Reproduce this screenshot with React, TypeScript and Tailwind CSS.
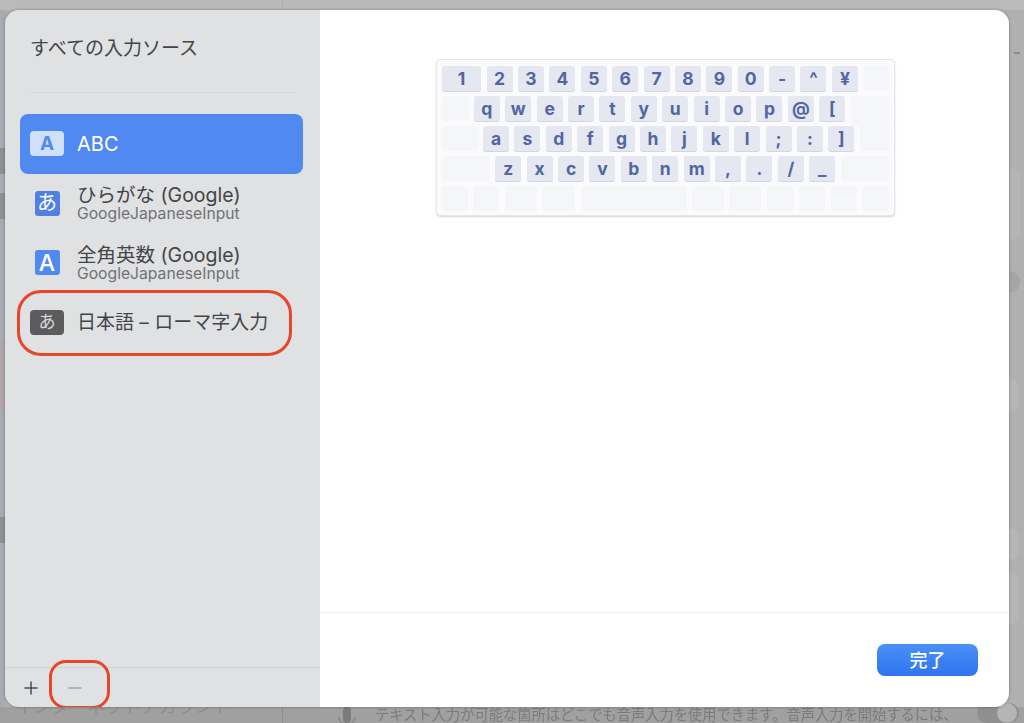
import React from "react";

const row1 = ["2", "3", "4", "5", "6", "7", "8", "9", "0", "-", "^", "¥"];
const row2 = ["q", "w", "e", "r", "t", "y", "u", "i", "o", "p", "@", "["];
const row3 = ["a", "s", "d", "f", "g", "h", "j", "k", "l", ";", ":", "]"];
const row4 = ["z", "x", "c", "v", "b", "n", "m", ",", ".", "/", "_"];

function Key({ label }: { label: string }) {
  return (
    <div className="flex h-[24.6px] w-[26px] shrink-0 items-center justify-center rounded-[3px] bg-[#e6e8f1] text-[17.5px] leading-none font-bold text-[#5266a3] shadow-[0_1px_0_#d3d6e0]">
      {label}
    </div>
  );
}

function Blank({ className }: { className: string }) {
  return <div className={`h-[24.6px] shrink-0 rounded-[3px] bg-[#f5f6f8] ${className}`} />;
}

function Keyboard() {
  return (
    <div className="flex h-[157px] w-[459px] flex-col gap-[5.4px] rounded-[4px] border border-[#e6e7ea] bg-[#fbfbfd] pt-[6px] pl-[5px] shadow-[0_1px_2px_rgba(0,0,0,0.16)]">
      <div className="flex h-[24.6px] gap-[5.4px]">
        <div className="flex h-[24.6px] w-[39.2px] shrink-0 items-center justify-center rounded-[3px] bg-[#e6e8f1] text-[17.5px] leading-none font-bold text-[#5266a3] shadow-[0_1px_0_#d3d6e0]">
          1
        </div>
        {row1.map((k) => (
          <Key key={k} label={k} />
        ))}
        <Blank className="w-[26.2px]" />
      </div>
      <div className="flex h-[24.6px] gap-[5.4px]">
        <Blank className="w-[26.5px]" />
        {row2.map((k) => (
          <Key key={k} label={k} />
        ))}
        <div className="h-[30px] w-[38.3px] shrink-0 rounded-t-[3px] bg-[#f5f6f8]" />
      </div>
      <div className="flex h-[24.6px] gap-[5.4px]">
        <Blank className="w-[35.7px]" />
        {row3.map((k) => (
          <Key key={k} label={k} />
        ))}
        <Blank className="w-[29.1px]" />
      </div>
      <div className="flex h-[24.6px] gap-[5.4px]">
        <Blank className="w-[47.9px]" />
        {row4.map((k) => (
          <Key key={k} label={k} />
        ))}
        <Blank className="w-[48.3px]" />
      </div>
      <div className="flex h-[24.6px] w-[447px] gap-[5.4px]">
        <Blank className="w-[26px]" />
        <Blank className="w-[26px]" />
        <Blank className="w-[32px]" />
        <Blank className="w-[33px]" />
        <Blank className="flex-1" />
        <Blank className="w-[32px]" />
        <Blank className="w-[32px]" />
        <Blank className="w-[27px]" />
        <Blank className="w-[26px]" />
        <div className="flex h-[24.6px] w-[26px] shrink-0 flex-col gap-px">
          <div className="h-[12px] rounded-t-[3px] bg-[#f5f6f8]" />
          <div className="h-[11.6px] rounded-b-[3px] bg-[#f5f6f8]" />
        </div>
        <Blank className="w-[27px]" />
      </div>
    </div>
  );
}

function SourceRow({
  icon,
  title,
  sub,
  selected,
  titleClass,
}: {
  icon: React.ReactNode;
  title: string;
  sub?: string;
  selected?: boolean;
  titleClass: string;
}) {
  return (
    <div
      className={`flex h-[59.5px] items-center rounded-[8px] ${selected ? "bg-[#5089ef] text-white" : "text-[#444548]"}`}
    >
      <div className="flex w-[57px] shrink-0 justify-center pr-[6px] pl-[3px]">{icon}</div>
      <div className="mt-[1px] flex flex-col">
        <div className={`leading-[21px] ${titleClass}`}>{title}</div>
        {sub && <div className="text-[15.7px] leading-[16px] text-[#717275]">{sub}</div>}
      </div>
    </div>
  );
}

function Sidebar() {
  return (
    <div className="flex w-[315px] shrink-0 flex-col bg-[#e0e1e3]">
      <div className="relative flex flex-1 flex-col">
        <div className="pt-[26px] pl-[25px] text-[19px] leading-[26px] text-[#444548]">
          すべての入力ソース
        </div>
        <div className="mt-[30px] mr-[26px] ml-[25px] h-px bg-[#d5d6d8]" />
        <div className="mt-[21px] flex flex-col pr-[17px] pl-[15px]">
          <SourceRow
            selected
            title="ABC"
            titleClass="text-[20px]"
            icon={
              <div className="flex h-[25px] w-[34px] items-center justify-center rounded-[4px] bg-[#cfe0fb] text-[19px] font-bold text-[#5089ef]">
                A
              </div>
            }
          />
          <SourceRow
            title="ひらがな (Google)"
            titleClass="text-[19.5px]"
            sub="GoogleJapaneseInput"
            icon={
              <div className="flex h-[25px] w-[25px] items-center justify-center rounded-[3px] bg-[#4f80e2] text-[20px] text-white">
                あ
              </div>
            }
          />
          <SourceRow
            title="全角英数 (Google)"
            titleClass="text-[19.5px]"
            sub="GoogleJapaneseInput"
            icon={
              <div className="flex h-[25px] w-[25px] items-center justify-center rounded-[3px] bg-[#5089ef] text-[23px] font-medium text-white">
                A
              </div>
            }
          />
          <SourceRow
            title="日本語 – ローマ字入力"
            titleClass="text-[19px]"
            icon={
              <div className="flex h-[25px] w-[34px] items-center justify-center rounded-[4px] bg-[#5c5c5e] text-[17px] text-[#d8d9db]">
                あ
              </div>
            }
          />
        </div>
        <div className="absolute top-[280px] left-[12px] h-[66px] w-[275px] rounded-[24px] border-[3px] border-[#e8452a]" />
      </div>
      <div className="relative flex h-[40px] shrink-0 items-center border-t border-[#d2d3d5] pl-[18px]">
        <svg width="16" height="16" viewBox="0 0 16 16" className="shrink-0">
          <path d="M8 1.5v13M1.5 8h13" stroke="#4b4c4f" strokeWidth="1.5" fill="none" />
        </svg>
        <svg width="16" height="16" viewBox="0 0 16 16" className="ml-[28px] shrink-0">
          <path d="M1.5 8h13" stroke="#a3a4a7" strokeWidth="1.5" fill="none" />
        </svg>
        <div className="absolute -top-[8px] left-[44px] h-[49px] w-[61px] rounded-[17px] border-[3px] border-[#e8452a]" />
      </div>
    </div>
  );
}

export default function App() {
  return (
    <div className="h-[723px] w-[1024px] overflow-hidden bg-[#a8a8a8]">
      <div className="flex h-[723px] w-[1024px] flex-col bg-[#b0b0b0] font-[Inter,'Noto_Sans_CJK_JP',sans-serif] blur-[0.35px]">
        <div className="flex h-[10px] shrink-0 bg-[#bababa]">
          <div className="w-[283px] border-r border-[#adadad]" />
        </div>
        <div className="flex h-[697px] shrink-0">
          <div className="flex w-[5px] shrink-0 flex-col bg-[#a9abb4]">
            <div className="mt-[138px] h-[26px] bg-[#8f9092]" />
            <div className="mt-[19px] h-[26px] bg-[#8f9092]" />
            <div className="mt-[120px] h-[70px] bg-[#b0a5a9]" />
            <div className="mt-[108px] h-[26px] bg-[#8f9092]" />
          </div>
          <div className="relative z-10 flex w-[1004px] shrink-0 overflow-hidden rounded-[14px] shadow-[0_0_3px_rgba(0,0,0,0.35)]">
            <Sidebar />
            <div className="flex flex-1 flex-col bg-white">
              <div className="flex-1 pt-[49px] pl-[116px]">
                <Keyboard />
              </div>
              <div className="flex h-[95px] shrink-0 justify-end border-t border-[#ececec] pt-[31px] pr-[31px]">
                <div className="flex h-[32px] w-[101px] items-center justify-center rounded-[8px] bg-linear-to-b from-[#4a90f8] to-[#2f74ee] text-[18px] font-medium text-white">
                  完了
                </div>
              </div>
            </div>
          </div>
          <div className="flex w-[15px] shrink-0 flex-col bg-[#b0b0b0]">
            <div className="mt-[42px] ml-[5px] h-[2px] w-[6px] bg-[#8a8a8a]" />
            <div className="mt-[115px] ml-[1px] h-[70px] w-[10px] rounded-r-[6px] bg-[#b5b5b5]" />
            <div className="mt-[32px] h-[22px] w-[11px] rounded-r-full bg-[#a5a5a5]" />
            <div className="mt-[86px] h-[33px] w-[9px] rounded-r-[6px] bg-[#b6b6b6]" />
            <div className="mt-[117px] h-[30px] w-[9px] rounded-r-[6px] bg-[#b6b6b6]" />
            <div className="mt-[13px] h-[52px] w-[9px] rounded-r-[6px] bg-[#b6b6b6]" />
          </div>
        </div>
        <div className="flex h-[16px] shrink-0 bg-[#a0a0a0]">
          <div className="w-[283px] shrink-0 overflow-visible border-r border-[#909090] pl-[15px] text-[18px] leading-[18px] whitespace-nowrap text-[#8e8e8e] blur-[0.6px]">
            <div className="-mt-[9px]">インターネットアカウント</div>
          </div>
          <div className="ml-[53px] flex w-[22px] shrink-0 justify-center">
            <svg width="22" height="16" viewBox="0 0 22 16">
              <rect x="7" y="0" width="8" height="16" rx="4" fill="#7c7c7c" />
              <path d="M3 10c0 4 3 7 8 7s8-3 8-7" stroke="#7c7c7c" strokeWidth="1.2" fill="none" />
            </svg>
          </div>
          <div className="ml-[17px] text-[14.27px] leading-[16px] whitespace-nowrap text-[#7b7b7b] blur-[0.5px]">
            テキスト入力が可能な箇所はどこでも音声入力を使用できます。音声入力を開始するには、
          </div>
          <div className="-mt-[4px] ml-[19px] flex h-[20px] w-[42px] shrink-0 justify-end rounded-full bg-[#8f8f8f]">
            <div className="mr-[2px] h-[20px] w-[20px] rounded-full bg-[#b5b5b5]" />
          </div>
        </div>
      </div>
    </div>
  );
}
